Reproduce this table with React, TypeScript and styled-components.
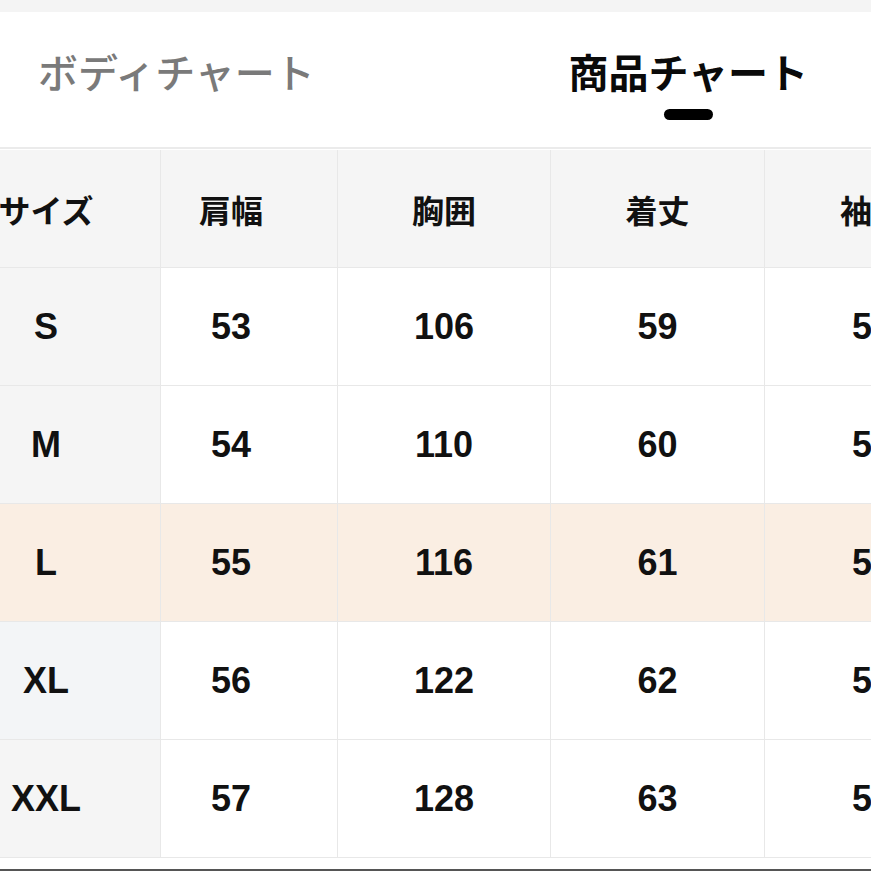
import React from "react";
import styled, { createGlobalStyle } from "styled-components";

const GlobalStyle = createGlobalStyle`
  html, body {
    margin: 0;
    padding: 0;
    background: #f4f4f4;
  }
  body {
    font-family: "Liberation Sans", "Noto Sans CJK JP", sans-serif;
    color: #111;
  }
`;

const Page = styled.div`
  width: 871px;
  height: 871px;
  overflow: hidden;
  padding-top: 12px;
  box-sizing: border-box;
  display: flex;
  flex-direction: column;
`;

const Sheet = styled.div`
  background: #fff;
  flex: 1;
  display: flex;
  flex-direction: column;
  border-bottom: 2px solid #555;
`;

const TabBar = styled.div`
  height: 137px;
  display: flex;
  justify-content: space-between;
  align-items: flex-start;
  padding: 0 63px 0 38px;
  border-bottom: 2px solid #ebebeb;
  box-sizing: border-box;
`;

const Tab = styled.div<{ $active?: boolean }>`
  display: flex;
  flex-direction: column;
  align-items: center;
  padding-top: 36px;
  font-family: "Noto Sans CJK JP", sans-serif;
  font-size: 40px;
  line-height: 46px;
  font-weight: ${(p) => (p.$active ? 700 : 500)};
  color: ${(p) => (p.$active ? "#0a0a0a" : "#7a7a7a")};
`;

const Indicator = styled.span`
  display: block;
  width: 49px;
  height: 11px;
  margin-top: 15px;
  border-radius: 6px;
  background: #000;
`;

const Scroller = styled.div`
  overflow: hidden;
  padding-top: 1px;
`;

const Grid = styled.div`
  display: grid;
  grid-template-columns: 228px 176px 212px 213px 214px;
  grid-auto-rows: 117px;
  gap: 1px;
  width: max-content;
  margin-left: -68px;
  background: #e8e8e8;
  border-bottom: 1px solid #e8e8e8;
`;

const Cell = styled.div<{ $bg: string; $pr?: number }>`
  display: flex;
  align-items: center;
  justify-content: center;
  background: ${(p) => p.$bg};
  padding-right: ${(p) => p.$pr ?? 0}px;
  font-size: 36px;
  font-weight: 700;
  color: #111;
`;

const HeadLabel = styled.span`
  font-family: "Noto Sans CJK JP", sans-serif;
  font-size: 32px;
  font-weight: 700;
`;

const heads = ["サイズ", "肩幅", "胸囲", "着丈", "袖丈"];

const rows: [string, string, string, string, string][] = [
  ["S", "53", "106", "59", "57"],
  ["M", "54", "110", "60", "58"],
  ["L", "55", "116", "61", "58"],
  ["XL", "56", "122", "62", "59"],
  ["XXL", "57", "128", "63", "59"],
];

const padFor = (i: number) => (i === 1 ? 36 : 0);

export default function App() {
  return (
    <>
      <GlobalStyle />
      <Page>
        <Sheet>
          <TabBar>
            <Tab>ボディチャート</Tab>
            <Tab $active>
              商品チャート
              <Indicator />
            </Tab>
          </TabBar>
          <Scroller>
            <Grid>
              {heads.map((h, i) => (
                <Cell key={h} $bg="#f5f5f5" $pr={padFor(i)}>
                  <HeadLabel>{h}</HeadLabel>
                </Cell>
              ))}
              {rows.map((r) =>
                r.map((v, i) => {
                  const hot = r[0] === "L";
                  const bg = hot
                    ? "#faeee3"
                    : i === 0
                    ? r[0] === "XL"
                      ? "#f3f5f7"
                      : "#f5f5f5"
                    : "#ffffff";
                  return (
                    <Cell key={r[0] + i} $bg={bg} $pr={padFor(i)}>
                      {v}
                    </Cell>
                  );
                })
              )}
            </Grid>
          </Scroller>
        </Sheet>
      </Page>
    </>
  );
}
